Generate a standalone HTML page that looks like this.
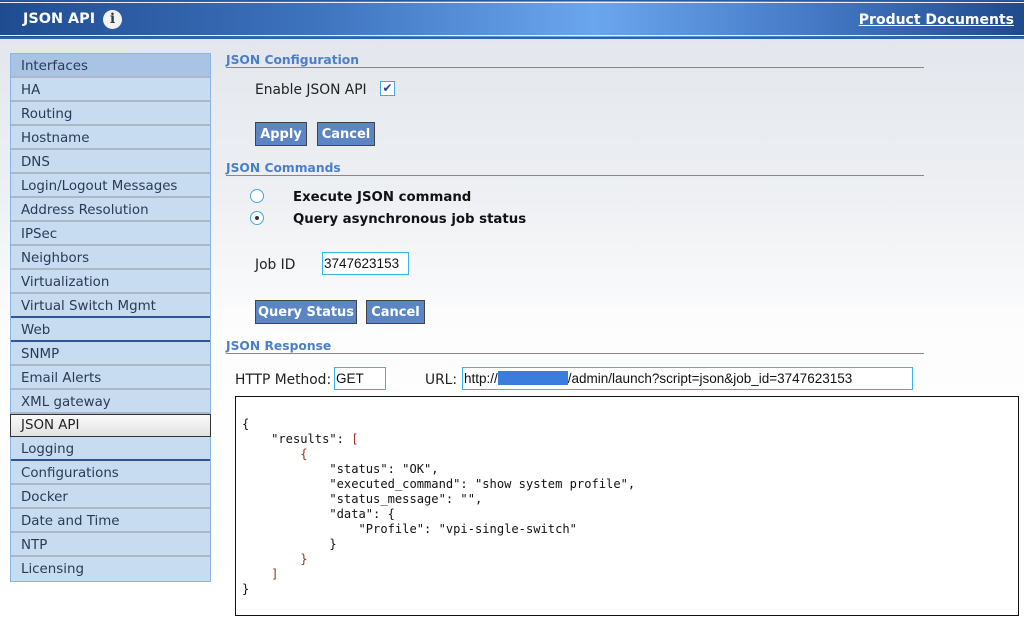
<!DOCTYPE html>
<html><head><meta charset="utf-8"><style>
*{margin:0;padding:0;box-sizing:border-box}
body{width:1024px;height:623px;overflow:hidden;font-family:"DejaVu Sans",Verdana,sans-serif;font-size:13.8px;color:#222;background:linear-gradient(#e3e7ed 40px,#eef0f3 200px,#fdfdfd 330px,#fff);position:relative}
.hdr{position:absolute;left:0;top:0;width:1024px;height:39px;background:linear-gradient(90deg,#1f4c90 0%,#3d72bd 30%,#6aa6ee 58%,#4478c4 80%,#1f4a8c 100%);border-top:1px solid #2a5aa0;border-bottom:2px solid #2f62b0}
.hdr:after{content:"";position:absolute;left:0;right:0;top:1px;height:1px;background:#e8f0fb}
.hdr:before{content:"";position:absolute;left:0;right:0;bottom:1px;height:1px;background:#e8f0fb}
.title{position:absolute;left:23px;top:10px;color:#fff;font-weight:bold;font-size:14.4px}
.info{position:absolute;left:103px;top:9px;width:19px;height:19px;border-radius:50%;background:#f3f3f3;color:#245;font:bold 14px "DejaVu Serif",serif;text-align:center;line-height:19px}
.pd{position:absolute;right:10px;top:11px;color:#fff;font-weight:bold;font-size:14px;text-decoration:underline}
.side{position:absolute;left:10px;top:53px;width:201px;border:1px solid #8ab4e6;background:#c8dcf1;font-size:13.4px}
.side div{height:24px;line-height:26px;padding-left:10px;color:#2a3a55;border-bottom:2px solid #aab8c8}
.side div.d{border-bottom-color:#2d5590}
.side div.first{background:#a9c3e5}
.side div.sel{background:linear-gradient(#fafafa,#e2e2e2);border:1px solid #333;color:#222;height:23px;line-height:21px;margin:0 -1px;padding-left:10px}
.side div:last-child{border-bottom:0}
.h{position:absolute;left:226px;width:698px;color:#4a7fc8;font-weight:bold;font-size:12.3px;border-bottom:1px solid #888;height:15px;line-height:15px}
.btn{position:absolute;background:#5b86c3;border:1px solid #444;color:#fff;font-weight:bold;font-size:13px;text-align:center;height:24px;line-height:24px}
.t{position:absolute}
.inp{position:absolute;border:1px solid #35b5e8;background:#fff;font-family:"Liberation Sans",Arial,sans-serif;font-size:13.5px;height:23px;line-height:21px;padding-left:1px;color:#111}
.radio{position:absolute;width:14px;height:14px;border:1px solid #4aa8d8;border-radius:50%;background:#fff}
.box{position:absolute;left:235px;top:396px;width:784px;height:220px;border:1px solid #111;background:#fff}
pre{font-family:"DejaVu Sans Mono",monospace;font-size:12.1px;line-height:15px;position:absolute;left:6px;top:20px;color:#111}
.r{color:#a0301a}
</style></head><body>
<div class="hdr"><span class="title">JSON API</span><span class="info">i</span><span class="pd">Product Documents</span></div>
<div class="side">
<div class="first">Interfaces</div><div>HA</div><div>Routing</div><div>Hostname</div><div>DNS</div><div>Login/Logout Messages</div><div>Address Resolution</div><div>IPSec</div><div>Neighbors</div><div>Virtualization</div><div class="d">Virtual Switch Mgmt</div><div class="d">Web</div><div>SNMP</div><div>Email Alerts</div><div>XML gateway</div><div class="sel">JSON API</div><div class="d">Logging</div><div>Configurations</div><div>Docker</div><div>Date and Time</div><div>NTP</div><div>Licensing</div>
</div>
<div class="h" style="top:53px">JSON Configuration</div>
<span class="t" style="left:255px;top:82px">Enable JSON API</span>
<div style="position:absolute;left:380px;top:81px;width:15px;height:15px;border:1px solid #4aa8d8;background:#fff;color:#244a8a;font-size:12px;line-height:13px;text-align:center">✔</div>
<div class="btn" style="left:255px;top:122px;width:52px">Apply</div>
<div class="btn" style="left:317px;top:122px;width:58px">Cancel</div>
<div class="h" style="top:161px">JSON Commands</div>
<div class="radio" style="left:250px;top:189px"></div>
<div class="radio" style="left:250px;top:211px"><div style="width:4px;height:4px;border-radius:50%;background:#333;margin:4px 0 0 4px"></div></div>
<span class="t" style="left:293px;top:190px;font-weight:bold;color:#111;font-size:13.3px">Execute JSON command</span>
<span class="t" style="left:293px;top:212px;font-weight:bold;color:#111;font-size:13.3px">Query asynchronous job status</span>
<span class="t" style="left:255px;top:257px">Job ID</span>
<div class="inp" style="left:322px;top:252px;width:87px">3747623153</div>
<div class="btn" style="left:255px;top:300px;width:102px">Query Status</div>
<div class="btn" style="left:366px;top:300px;width:59px">Cancel</div>
<div class="h" style="top:339px">JSON Response</div>
<span class="t" style="left:235px;top:372px">HTTP Method:</span>
<div class="inp" style="left:334px;top:367px;width:52px">GET</div>
<span class="t" style="left:425px;top:372px">URL:</span>
<div class="inp" style="left:462px;top:367px;width:451px">http://<span style="display:inline-block;width:70px;height:14px;background:#3b7ddd;vertical-align:-2px"></span>/admin/launch?script=json&amp;job_id=3747623153</div>
<div class="box"><pre>{
    "results": <span class="r">[</span>
        <span class="r">{</span>
            "status": "OK",
            "executed_command": "show system profile",
            "status_message": "",
            "data": {
                "Profile": "vpi-single-switch"
            }
        <span class="r">}</span>
    <span class="r">]</span>
}</pre></div>
</body></html>
